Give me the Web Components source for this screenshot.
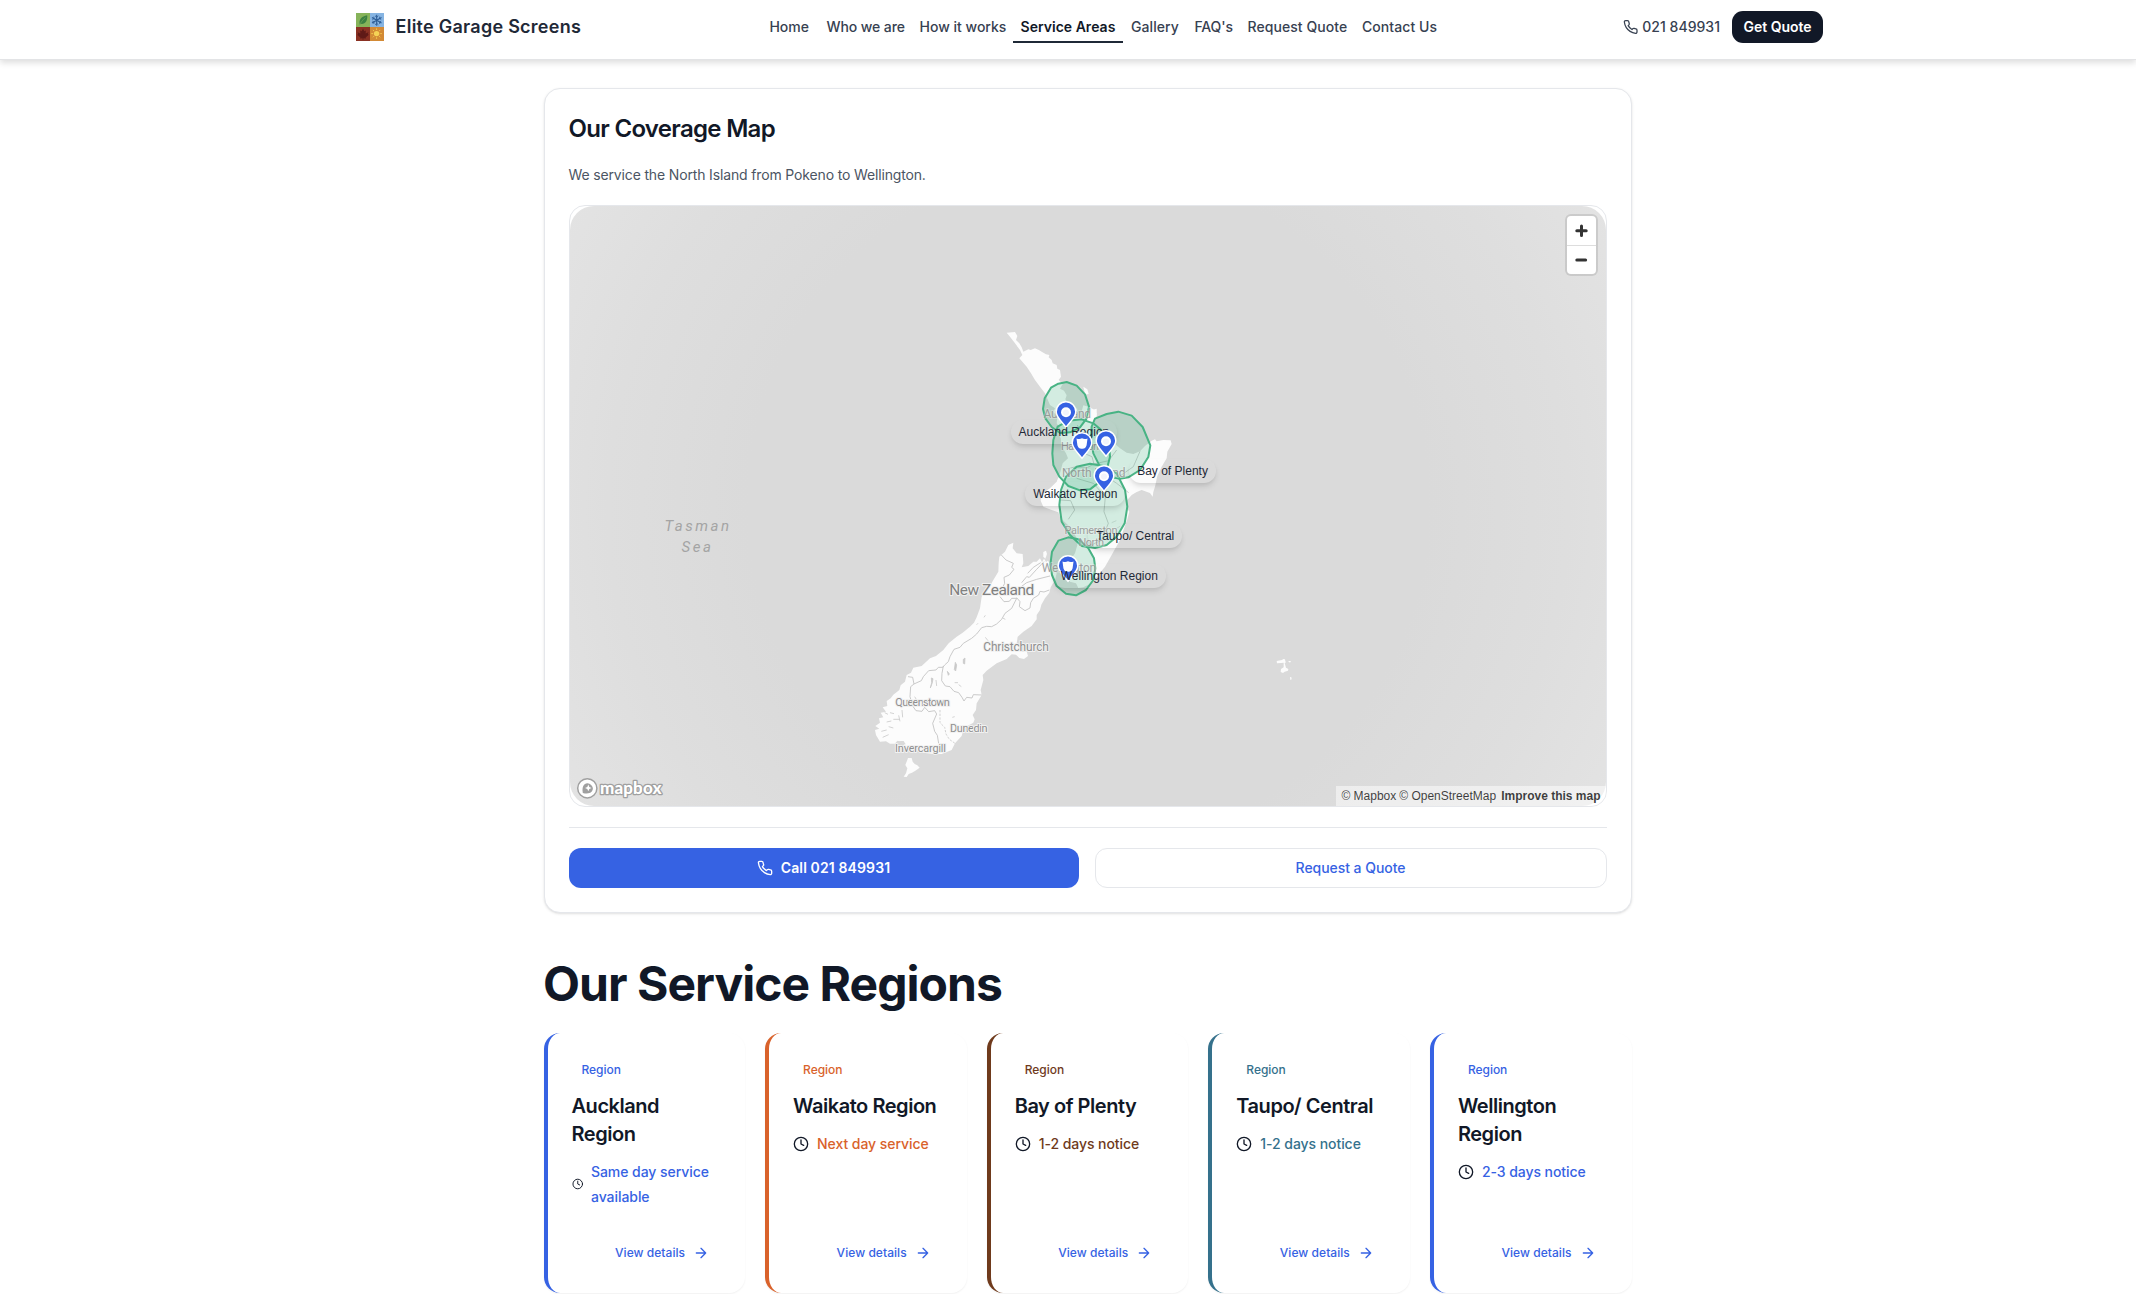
<!DOCTYPE html>
<html lang="en">
<head>
<meta charset="utf-8">
<title>Service Areas - Elite Garage Screens</title>
<style>
html,body{margin:0;background:#fff}
body{font-family:Inter,"Liberation Sans",sans-serif;font-size:14px;line-height:20px;color:#111827;height:1294px;overflow:hidden}
main{width:1088px;margin:28px auto 0 543.500px}
</style>
</head>
<body>
<site-header></site-header>
<main>
  <coverage-card>
    <coverage-map></coverage-map>
  </coverage-card>
  <service-regions>
    <region-card color="#3662e3" name="Auckland Region" compact>Same day service available</region-card>
    <region-card color="#d9622b" name="Waikato Region">Next day service</region-card>
    <region-card color="#6f3a1c" name="Bay of Plenty">1-2 days notice</region-card>
    <region-card color="#35718c" name="Taupo/ Central">1-2 days notice</region-card>
    <region-card color="#3662e3" name="Wellington Region">2-3 days notice</region-card>
  </service-regions>
</main>
<script>
const define = (name, html, setup) => customElements.define(name, class extends HTMLElement {
  connectedCallback() {
    if (this.shadowRoot) return;
    this.attachShadow({mode: 'open'}).innerHTML = typeof html === 'function' ? html(this) : html;
    if (setup) setup(this);
  }
});

const ICONS = {
  phone: '<path d="M22 16.92v3a2 2 0 0 1-2.18 2 19.79 19.79 0 0 1-8.63-3.07 19.5 19.5 0 0 1-6-6 19.79 19.79 0 0 1-3.07-8.67A2 2 0 0 1 4.11 2h3a2 2 0 0 1 2 1.72 12.84 12.84 0 0 0 .7 2.81 2 2 0 0 1-.45 2.11L8.09 9.91a16 16 0 0 0 6 6l1.27-1.27a2 2 0 0 1 2.11-.45 12.84 12.84 0 0 0 2.81.7A2 2 0 0 1 22 16.92z"/>',
  clock: '<circle cx="12" cy="12" r="10"/><path d="M12 6v6l4 2"/>',
  arrow: '<path d="M5 12h14M12 5l7 7-7 7"/>'
};
define('line-icon', el => `<style>
  :host{display:inline-flex;width:16px;height:16px}
  svg{width:100%;height:100%;fill:none;stroke:currentColor;stroke-width:2;stroke-linecap:round;stroke-linejoin:round}
</style><svg viewBox="0 0 24 24">${ICONS[el.getAttribute('name')]}</svg>`);

define('season-logo', `<style>:host{display:block;width:28px;height:28px}svg{display:block}</style>
<svg width="28" height="28" viewBox="0 0 28 28">
  <rect width="14" height="14" fill="#86b35a"/><rect x="14" width="14" height="14" fill="#86b4e2"/>
  <rect y="14" width="14" height="14" fill="#8a3123"/><rect x="14" y="14" width="14" height="14" fill="#d38a35"/>
  <path d="M3.800 11.600C2.600 7 5.500 3 11.200 2.200c.6 5.500-2 9.300-6.400 8.600Z" fill="#3b8142"/>
  <path d="M3.300 12.500C5 9 7 6.500 9.500 4.500" stroke="#6ea453" stroke-width=".7" fill="none"/>
  <g stroke="#2d5d96" stroke-width="1.100" fill="none"><path d="M20.700 1.800v11M16 4.500l9.500 5.500M16 10l9.500-5.500"/><path d="M19 2.800l1.700 1.500 1.700-1.500M19 11.800l1.700-1.500 1.700 1.500M16.300 6.500l1.700-.9-.2-2M25.200 8.100l-1.700.9.2 2M16.300 8.100l1.700.9-.2 2M25.200 6.500l-1.700-.9.2-2" stroke-width=".8"/></g>
  <path d="M7 15.800l1.400 2.500 1.500-.8-.3 3 2.900-1.200-.7 1.800 1 .7-3.200 2.700.3 1-2.500-.3v1.600h-.8v-1.600l-2.500.3.300-1-3.200-2.700 1-.7-.7-1.800 2.900 1.200-.3-3 1.500.8z" fill="#5f1a17"/>
  <circle cx="20.600" cy="20.600" r="2.700" fill="#f5d255"/>
  <path d="M20.600 15.300v1.700M20.600 24.200v1.700M15.300 20.600h1.700M24.200 20.600h1.700M16.900 16.900l1.200 1.200M23.100 23.100l1.200 1.200M16.900 24.300l1.200-1.200M23.100 18.100l1.200-1.200" stroke="#f0c54c" stroke-width="1"/>
</svg>`);

define('nav-link', el => `<style>
  :host{display:block;box-sizing:border-box;width:${el.getAttribute('w')}px;height:32px;padding:6px 8px 4px;border-bottom:2px solid transparent;font-weight:450;color:#374151;white-space:nowrap;letter-spacing:${el.getAttribute('ls')||.07}px}
  :host([current]){font-weight:600;color:#111827;border-color:#1f2937;letter-spacing:0.02px}
</style><slot></slot>`);

define('site-header', `<style>
  :host{display:block;box-sizing:border-box;height:60px;padding:11px 313px 0 356px;border-bottom:1px solid #e3e4e6;background:#fff;box-shadow:0 3px 6px rgba(0,0,0,.13)}
  .row{display:grid;grid-template-columns:405.500px 1fr auto;align-items:center;height:32px}
  .brand{display:flex;align-items:center;gap:11.500px;font-size:18px;line-height:28px;font-weight:600;color:#1f2937;letter-spacing:.26px}
  nav{display:flex}
  .actions{display:flex;align-items:center;gap:12px}
  .tel{display:flex;align-items:center;gap:4px;font-weight:450;color:#374151;width:97px;white-space:nowrap;letter-spacing:.03px}
  .quote{width:91px;height:32px;line-height:32px;text-align:center;border-radius:11px;background:#111827;color:#fff;font-weight:600;letter-spacing:-.05px}
</style>
<div class="row">
  <div class="brand"><season-logo></season-logo>Elite Garage Screens</div>
  <nav>
    <nav-link w="57" ls="-.05">Home</nav-link><nav-link w="93" ls="-.1">Who we are</nav-link><nav-link w="101" ls="0">How it works</nav-link><nav-link w="110.500" current>Service Areas</nav-link><nav-link w="63.500">Gallery</nav-link><nav-link w="53" ls="-.15">FAQ's</nav-link><nav-link w="114.500">Request Quote</nav-link><nav-link w="91">Contact Us</nav-link>
  </nav>
  <div class="actions"><div class="tel"><line-icon name="phone"></line-icon>021 849931</div><div class="quote">Get Quote</div></div>
</div>`);

define('coverage-card', `<style>
  :host{display:flex;flex-direction:column;box-sizing:border-box;height:825px;padding:24px;border:1px solid #e5e7eb;border-radius:16px;background:#fff;box-shadow:0 1px 3px rgba(0,0,0,.1),0 1px 2px -1px rgba(0,0,0,.1)}
  h2{margin:0;font-size:24px;line-height:32px;font-weight:600;letter-spacing:-.7px}
  p{margin:20px 0;color:#4b5563;line-height:20px;letter-spacing:-.15px}
  .buttons{display:flex;gap:16px;margin-top:20px;padding-top:20px;border-top:1px solid #e5e7eb}
  .btn{display:flex;align-items:center;justify-content:center;box-sizing:border-box;height:40px;border-radius:12px}
  .call{width:510px;background:#3662e3;color:#fff;font-weight:600;gap:8px;letter-spacing:.12px}
  .request{width:512px;border:1px solid #e5e7eb;color:#3662e3;font-weight:500;letter-spacing:-.05px}
</style>
<h2>Our Coverage Map</h2>
<p>We service the North Island from Pokeno to Wellington.</p>
<slot></slot>
<div class="buttons"><div class="btn call"><line-icon name="phone"></line-icon>Call 021 849931</div><div class="btn request">Request a Quote</div></div>`);

/* A pin with its pill label; x/y is the bulb centre, lx/ly the pill's bottom left corner. */
define('map-region', el => {
  const a = n => +el.getAttribute(n), ox = 570, oy = 206;
  const bulb = el.hasAttribute('shield')
    ? '<path d="M5.500 6.400Q8.500 7.500 11 6.200Q13.500 7.500 16.500 6.400L15.600 13.200Q14.500 17 11 16.700Q7.500 17 6.400 13.200Z" fill="#fff"/>'
    : '<circle cx="11" cy="11.300" r="5" fill="#fff"/><circle cx="11" cy="11.500" r="3" fill="#f1f3fb"/>';
  return `<style>
  :host{display:contents}
  svg{position:absolute;left:${a('x')-ox-11}px;top:${a('y')-oy-11}px;overflow:visible}
  span{position:absolute;left:${a('lx')-ox-.3}px;top:${a('ly')-oy-24}px;height:24px;padding:0 8px;border-radius:12px;font:12px/24px "Liberation Sans",Arial,sans-serif;color:#1f2937;white-space:nowrap;background:rgba(255,255,255,.02);box-shadow:0 4px 6px -1px rgba(0,0,0,.12),0 2px 4px -1px rgba(0,0,0,.05)}
</style>
<svg width="22" height="28" viewBox="0 0 22 28"><path d="M11 .8a9.800 9.800 0 0 0-9.800 10c0 5.700 5.600 9.400 9.800 15.600 4.200-6.200 9.800-9.900 9.800-15.600A9.800 9.800 0 0 0 11 .8z" fill="#3662e3" stroke="#fff" stroke-width="1.500" stroke-linejoin="round"/>${bulb}</svg>
<span>${el.getAttribute('label')}</span>`;
});

define('zoom-control', `<style>
  :host{position:absolute;right:10px;top:10px;display:grid;grid-template-rows:29px 29px;width:29px;border-radius:4px;background:#fff;box-shadow:0 0 0 2px rgba(0,0,0,.1)}
  svg{display:block}div+div{border-top:1px solid #ddd}
</style>
<div><svg width="29" height="29" viewBox="0 0 29 29"><path d="M14.500 10v9.500M9.800 14.700h9.400" stroke="#333" stroke-width="3" stroke-linecap="round"/></svg></div>
<div><svg width="29" height="28" viewBox="0 0 29 28"><path d="M9.800 14h8.800" stroke="#333" stroke-width="3" stroke-linecap="round"/></svg></div>`);

const NORTH = "140,68 165,66 172,78 168,90 178,100 185,112 190,125 205,118 212,120 225,115 238,121 245,125 258,133 268,135 266,142 275,150 278,160 290,165 292,176 300,180 303,200 296,210 308,222 300,236 312,242 320,256 316,268 325,280 330,296 340,290 352,296 350,312 355,325 370,332 376,322 366,300 370,286 385,290 400,298 410,310 408,325 402,345 410,352 420,375 430,388 450,398 465,402 480,415 500,428 520,432 540,424 555,408 575,392 585,388 590,394 610,390 632,391 635,402 622,425 620,445 605,470 592,498 585,530 580,546 578,560 570,549 545,540 530,546 515,555 500,572 500,592 508,605 502,628 494,650 480,690 455,735 435,770 415,795 390,822 370,832 355,834 348,820 330,815 322,796 310,800 300,790 310,770 330,752 345,730 352,705 350,685 335,655 318,640 300,622 295,607 275,600 250,590 242,572 245,552 270,535 290,515 300,490 308,460 324,445 318,430 305,410 302,385 296,372 300,355 290,340 292,320 280,305 285,295 270,285 255,250 240,230 225,210 212,188 200,170 178,145 187,135 180,120 165,100 150,80";
const SOUTH = "520,38 518,55 530,70 548,72 550,100 545,112 565,108 580,95 590,95 600,85 606,97 612,86 618,96 624,92 635,110 650,130 645,150 632,172 628,188 615,205 604,224 600,240 590,255 590,268 575,288 550,305 533,320 530,340 540,358 548,366 560,364 564,378 552,387 538,384 528,374 515,373 500,387 470,400 440,422 428,435 430,450 422,480 425,495 410,520 408,540 398,555 404,568 400,578 378,590 370,600 365,618 345,640 335,660 305,672 280,672 250,668 215,655 195,650 188,636 172,632 165,641 150,641 138,634 120,635 108,615 105,600 118,596 106,588 120,578 117,565 130,562 122,548 138,545 128,532 142,528 140,513 152,505 160,494 178,480 182,466 195,455 200,435 213,428 220,413 245,408 270,385 288,378 310,360 326,340 350,320 368,308 390,290 402,278 410,262 420,235 425,200 440,180 448,172 460,150 475,125 476,100 478,80 495,65 505,45";

define('coverage-map', `<style>
  :host{display:block;box-sizing:border-box;height:602px;border:1px solid #e5e7eb;border-radius:16px;overflow:hidden}
  .canvas{position:relative;height:600px;border-radius:24px;background:radial-gradient(circle at 518px 300px,#dadada 0,#dadada 340px,#dedede 480px,#e3e3e3 600px)}
  .base,.over{display:block;width:1036px;height:600px}
  .over{position:absolute;left:0;top:0}
  text{font-family:Roboto,"Open Sans",sans-serif;font-weight:400;fill:#8f8f8f;stroke:#f1f1f1;stroke-width:2px;paint-order:stroke;stroke-linejoin:round}
  .sea{fill:#a4a4a4;stroke:none;font-style:italic;font-size:15px;font-weight:400}
  .logo text{font-family:Lato,sans-serif;font-weight:900;font-size:17px;fill:#fff;stroke:#a0a0a0;stroke-width:2.600px}
  .credit{position:absolute;right:0;bottom:0;height:20px;padding:0 5px;background:rgba(255,255,255,.5);font:12px/20px "Liberation Sans",Arial,sans-serif;color:rgba(0,0,0,.75);white-space:nowrap;display:flex;gap:3px}
  .credit b{margin-left:2px}
</style>
<div class="canvas">
<svg class="base" viewBox="570 206 1036 600">
  <g transform="translate(960 310) scale(.33333)">
    <polygon points="${NORTH}" fill="#fcfcfc"/>
    <polygon points="370,230 382,238 386,252 376,254" fill="#fcfcfc"/>
    <polygon points="395,300 410,296 410,320 398,312" fill="#fcfcfc"/>
    <path d="M352 345L366 372 360 400 372 430 396 440 402 462 380 474 350 470 312 478M402 462L446 452 470 420M446 452L440 500 470 520 506 548M300 570L332 572 344 600 325 628M440 500L436 560 432 605 445 640 425 690 380 712M436 560L400 520 350 505M540 424L520 470 480 498" fill="none" stroke="#c4c4c4" stroke-width="2.500"/>
    <path d="M428 475l14-4 4 12-12 6zM455 638l14-6M470 655l10-6" fill="#d4d4d4" stroke="#d0d0d0" stroke-width="2"/>
  </g>
  <g transform="translate(840 530) scale(.33333)">
    <polygon points="${SOUTH}" fill="#fcfcfc"/>
    <polygon points="204,684 215,684 218,695 224,702 232,706 239,713 226,722 216,728 206,732 200,741 191,740 198,730 202,715 196,705 201,692" fill="#fcfcfc"/>
    <polygon points="610,66 618,62 621,72 616,86 610,80" fill="#fcfcfc"/>
    <path d="M484 75L498 90 520 100 515 112 522 118 508 135 492 142 494 160 488 172M480 200L492 215 508 214 515 205 530 205M530 205L515 235 495 250 485 268 470 282 455 290 440 289 425 293 410 312 395 325 370 340 360 352 342 358 330 380 325 395 314 405 308 412 295 412 288 420 266 422 250 440 244 452 222 462M204 440L218 442 222 462 212 470 210 500M530 203L540 215 538 230 555 242 570 234 572 218 580 205 596 195 600 184 612 186 628 180M545 158L560 140 568 142 590 118 612 95M530 180L560 158 590 148 630 138M563 130L580 112 602 98M310 408L306 430 305 452 316 468 330 470 342 484 356 488 366 502 372 513 380 502 396 504 400 494 425 495M210 500L218 528 228 542 246 544 254 532 266 545 284 542 290 552 278 580 284 604 292 616 296 640" fill="none" stroke="#c2c2c2" stroke-width="2.600"/>
    <path d="M300 540V578L314 592 318 612 328 628 345 640" fill="none" stroke="#c8c8c8" stroke-width="2.400" stroke-dasharray="7 4"/>
    <path d="M346 397l4 8-3 18-4-4zM370 388l5-4-1 18-4-2zM322 424l6 8-3 4zM274 444l5 2-2 12-6 16 4-16zM288 450l2 18M344 458h10M356 464l8 6M432 262l4-6M410 284l4-4M436 322l8 10M488 264l8 4M160 568h20M176 556l4 18M186 540l2 22M140 576l14-3M150 548l12 3M146 590l14 4M134 548l10 5M124 604l16-4M128 622l18-8M224 500l6 10M337 562l7-2M350 602l5-2" fill="#c8c8c8" stroke="#cacaca" stroke-width="2.500"/>
    <path d="M165 641q6-10 26-8l6 10-12 2z" fill="#dadada"/>
  </g>
  <g transform="translate(1260 640) scale(.33333)" fill="#fcfcfc">
    <path d="M50 63l16-3 4-3 5 1 1 6 2 3-4 2 4 14 7 4-1 5-10 3-5 4-7-3 1-9 8-5 0-14-8 1-12 1zM84 63l9 0-3 5zM90 111l4 1 1 6-4 2z"/>
  </g>
  <text class="sea" x="664.500" y="531" textLength="64.500">Tasman</text>
  <text class="sea" x="681.500" y="551.500" textLength="29.500">Sea</text>
  <text x="949.300" y="594.700" font-size="15.500" textLength="85" style="fill:#808080">New Zealand</text>
  <text x="983.300" y="651.300" font-size="12" textLength="65.500">Christchurch</text>
  <text x="895.300" y="705.700" font-size="11" textLength="54.500">Queenstown</text>
  <text x="950" y="731.700" font-size="11" textLength="37.500">Dunedin</text>
  <text x="895" y="751.600" font-size="11" textLength="51">Invercargill</text>
  <g transform="translate(960 310) scale(.33333)" fill="#34b17a" fill-opacity=".2" stroke="#48b384" stroke-width="6" stroke-linejoin="round">
    <polygon points="320,216 350,227 375,253 387,290 380,325 360,352 330,367 300,369 275,351 256,325 249,297 254,265 273,233 295,221"/>
    <polygon points="365,328 400,340 430,365 447,400 450,440 440,480 420,515 390,538 360,541 325,528 298,500 280,465 277,430 280,390 293,350 325,332"/>
    <polygon points="405,326 440,312 475,305 515,317 548,351 571,406 565,441 540,480 505,502 480,506 450,500 420,470 400,430 393,390 395,350"/>
    <polygon points="390,461 430,468 470,490 495,540 502,590 494,640 470,680 440,705 405,714 365,708 330,675 305,635 298,585 303,540 318,500 350,470"/>
    <polygon points="325,682 355,688 385,715 402,745 406,775 400,810 378,840 348,856 318,851 290,828 276,795 271,765 276,725 295,692"/>
  </g>
  <g fill-opacity=".85" stroke-opacity=".35">
  <text x="1043.500" y="417.700" font-size="12" textLength="47.500">Auckland</text>
  <text x="1061" y="449.500" font-size="11" textLength="38">Hamilton</text>
  <text x="1062" y="477.300" font-size="12" textLength="63.500">North Island</text>
  <text x="1064.500" y="534" font-size="11" textLength="53">Palmerston</text>
  <text x="1078.500" y="545.600" font-size="11" textLength="25.500">North</text>
  <text x="1041.700" y="572.300" font-size="12" textLength="54.500">Wellington</text>
  </g>
</svg>
<map-region x="1066.700" y="411.500" lx="1011.300" ly="444" label="Auckland Region"></map-region>
<map-region x="1082" y="443.300" lx="1026" ly="506" label="Waikato Region" shield></map-region>
<map-region x="1106" y="440.700" lx="1130" ly="482.700" label="Bay of Plenty"></map-region>
<map-region x="1104" y="476" lx="1089" ly="547.700" label="Taupo/ Central"></map-region>
<map-region x="1068.700" y="565.700" lx="1053.500" ly="588" label="Wellington Region" shield></map-region>
<svg class="over logo" viewBox="570 206 1036 600">
  <circle cx="587.300" cy="788.300" r="9.600" fill="#fff" stroke="#a0a0a0" stroke-width="1.500"/>
  <path d="M582.800 792.900c-.7-3.800-.2-6.700 1.500-8.400a5.200 5.200 0 0 1 7.300 7.300c-1.700 1.700-5 2.100-8.800 1.100z" fill="#a0a0a0"/>
  <path d="M588.300 784.600l1 2.300 2.300 1-2.300 1-1 2.300-1-2.300-2.300-1 2.300-1z" fill="#fff"/>
  <text x="600" y="793.500" textLength="61.500">mapbox</text>
</svg>
<zoom-control></zoom-control>
<div class="credit"><span>© Mapbox</span><span>© OpenStreetMap</span><b>Improve this map</b></div>
</div>`);

define('service-regions', `<style>
  :host{display:block;margin-top:41px}
  h2{margin:0 0 19px -.5px;font-size:48px;line-height:60px;font-weight:700;letter-spacing:-.96px}
  .grid{display:grid;grid-template-columns:repeat(5,1fr);gap:20px;height:260px}
</style><h2>Our Service Regions</h2><div class="grid"><slot></slot></div>`);

define('region-card', el => `<style>
  :host{display:flex;flex-direction:column;box-sizing:border-box;height:260px;padding:29px 24px 24px;border-left:4px solid ${el.getAttribute('color')};border-radius:16px;background:#fff;box-shadow:0 1px 2px rgba(0,0,0,.06)}
  .tag{padding:0 10px;font-size:12px;line-height:16px;font-weight:450;color:${el.getAttribute('color')};letter-spacing:-.03px}
  h3{margin:14px 0 11px;font-size:20px;line-height:28px;font-weight:600;letter-spacing:-.46px}
  .notice{display:flex;align-items:center;gap:8px;line-height:25px;font-weight:450;letter-spacing:-.06px}
  .notice span{color:${el.getAttribute('color')}}
  line-icon{flex:none}
  :host([compact]) .notice line-icon{width:11.500px}
  .more{display:flex;align-items:center;justify-content:flex-end;gap:8px;height:32px;margin-top:auto;padding-right:12px;font-size:12px;font-weight:450;letter-spacing:.05px;color:#3662e3}
</style>
<div class="tag">Region</div>
<h3>${el.getAttribute('name')}</h3>
<div class="notice"><line-icon name="clock"></line-icon><span><slot></slot></span></div>
<div class="more">View details<line-icon name="arrow"></line-icon></div>`);
</script>
</body>
</html>
